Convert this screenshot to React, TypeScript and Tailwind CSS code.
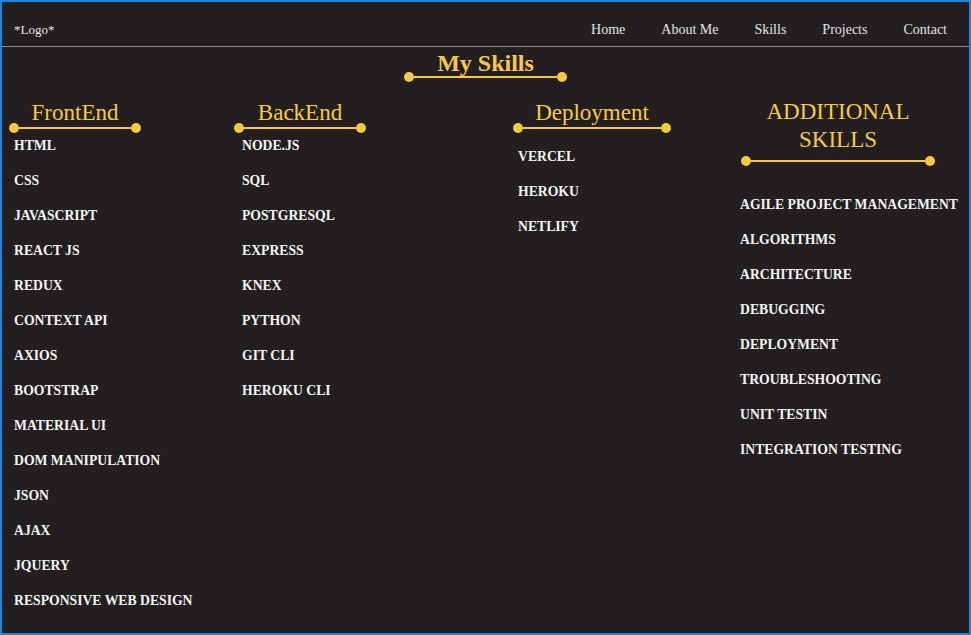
import React from "react";

const serif = { fontFamily: '"Liberation Serif", "Times New Roman", serif' };

function Underline({ width }: { width: string }) {
  return (
    <div className={`flex h-[10px] items-center ${width}`}>
      <div className="h-[10px] w-[10px] shrink-0 rounded-full bg-[#fbc93d]" />
      <div className="h-[2px] flex-1 bg-[#fbc93d]" />
      <div className="h-[10px] w-[10px] shrink-0 rounded-full bg-[#fbc93d]" />
    </div>
  );
}

function ItemList({ items, className }: { items: string[]; className: string }) {
  return (
    <ul className={`flex flex-col gap-[19px] ${className}`}>
      {items.map((it) => (
        <li key={it} className="text-[13.7px] font-bold leading-[16px] text-[#f4f4f4]">
          {it}
        </li>
      ))}
    </ul>
  );
}

const frontEnd = [
  "HTML",
  "CSS",
  "JAVASCRIPT",
  "REACT JS",
  "REDUX",
  "CONTEXT API",
  "AXIOS",
  "BOOTSTRAP",
  "MATERIAL UI",
  "DOM MANIPULATION",
  "JSON",
  "AJAX",
  "JQUERY",
  "RESPONSIVE WEB DESIGN",
];
const backEnd = ["NODE.JS", "SQL", "POSTGRESQL", "EXPRESS", "KNEX", "PYTHON", "GIT CLI", "HEROKU CLI"];
const deployment = ["VERCEL", "HEROKU", "NETLIFY"];
const additional = [
  "AGILE PROJECT MANAGEMENT",
  "ALGORITHMS",
  "ARCHITECTURE",
  "DEBUGGING",
  "DEPLOYMENT",
  "TROUBLESHOOTING",
  "UNIT TESTIN",
  "INTEGRATION TESTING",
];

export default function App() {
  return (
    <div
      className="h-[635px] w-[971px] overflow-hidden border-2 border-[#1789e0] bg-[#231f20]"
      style={serif}
    >
      <header className="flex h-[45px] items-start justify-between border-b border-[#8e8e8e] pl-[12px] pr-[22px] pt-[18px]">
        <div className="text-[13px] leading-[20px] text-[#e4e4e4]">*Logo*</div>
        <nav className="flex gap-[36px] text-[14px] leading-[20px] text-[#e4e4e4]">
          <span>Home</span>
          <span>About Me</span>
          <span>Skills</span>
          <span>Projects</span>
          <span>Contact</span>
        </nav>
      </header>

      <section className="flex flex-col items-center">
        <h1 className="mt-[4px] text-[24px] font-bold leading-[24px] text-[#fbc93d]">My Skills</h1>
        <Underline width="w-[163px] -mt-[3px]" />
      </section>

      <div className="mt-[18px] flex pl-[7px]">
        <div className="w-[225px]">
          <div className="flex w-[132px] flex-col items-center">
            <h2 className="text-[23px] leading-[26px] text-[#fbc93d]">FrontEnd</h2>
            <Underline width="w-full -mt-[3px]" />
          </div>
          <ItemList items={frontEnd} className="mt-[5px] pl-[5px]" />
        </div>

        <div className="w-[279px]">
          <div className="flex w-[132px] flex-col items-center">
            <h2 className="text-[23px] leading-[26px] text-[#fbc93d]">BackEnd</h2>
            <Underline width="w-full -mt-[3px]" />
          </div>
          <ItemList items={backEnd} className="mt-[5px] pl-[8px]" />
        </div>

        <div className="w-[228px]">
          <div className="flex w-[158px] flex-col items-center">
            <h2 className="text-[23px] leading-[26px] text-[#fbc93d]">Deployment</h2>
            <Underline width="w-full -mt-[3px]" />
          </div>
          <ItemList items={deployment} className="mt-[16px] pl-[5px]" />
        </div>

        <div className="flex-1">
          <div className="-mt-[2px] flex w-[194px] flex-col items-center">
            <h2 className="text-center text-[23px] leading-[28px] text-[#fbc93d]">
              <span className="block">ADDITIONAL</span>
              <span className="block">SKILLS</span>
            </h2>
            <Underline width="w-full mt-[2px]" />
          </div>
          <ItemList items={additional} className="mt-[31px] -ml-px" />
        </div>
      </div>
    </div>
  );
}
